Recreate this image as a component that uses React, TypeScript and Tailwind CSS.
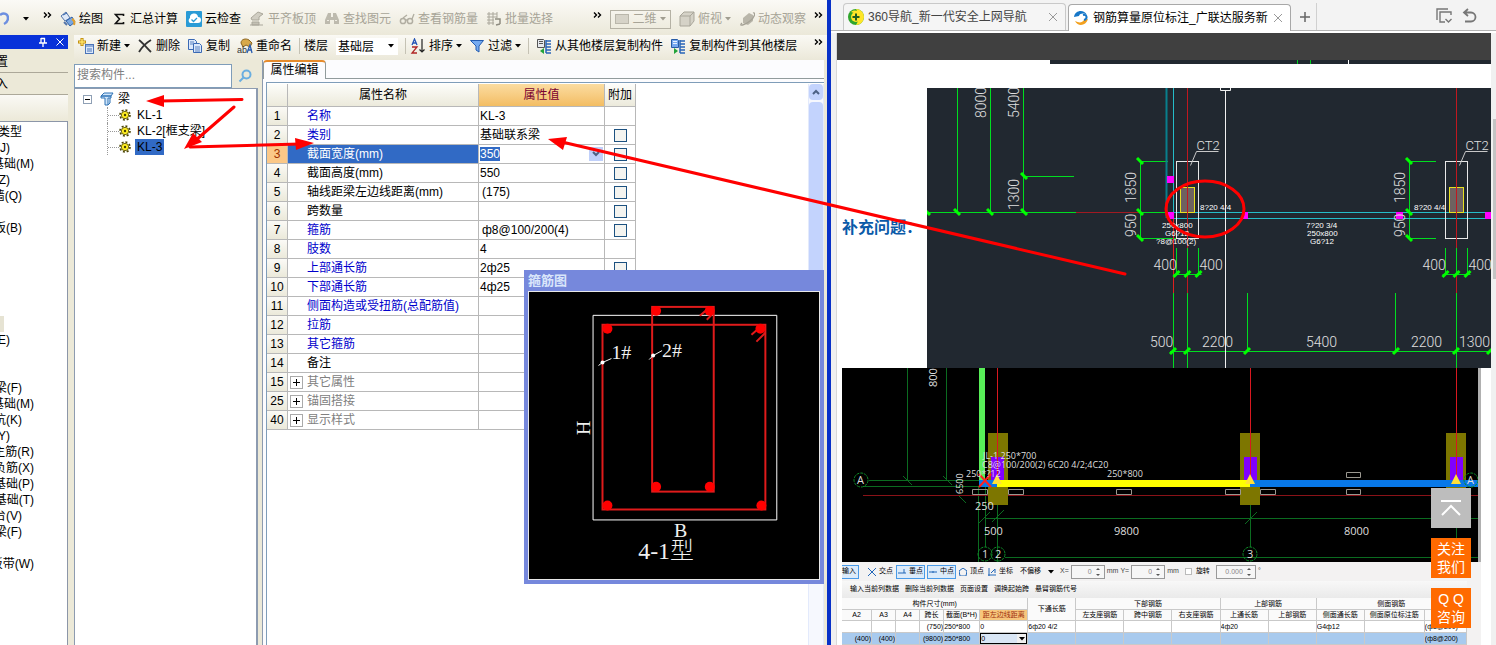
import type { ReactNode } from "react";

interface PropertyRow {
  no: number;
  name: string;
  value?: string;
  tone?: "blue" | "gray" | "black";
  check?: boolean;
  group?: boolean;
}

const properties: PropertyRow[] = [
  { no: 1, name: "名称", value: "KL-3", tone: "blue" },
  { no: 2, name: "类别", value: "基础联系梁", tone: "blue", check: true },
  { no: 3, name: "截面宽度(mm)", value: "350", check: true },
  { no: 4, name: "截面高度(mm)", value: "550", check: true },
  { no: 5, name: "轴线距梁左边线距离(mm)", value: "(175)", check: true },
  { no: 6, name: "跨数量", check: true },
  { no: 7, name: "箍筋", value: "ф8@100/200(4)", tone: "blue", check: true },
  { no: 8, name: "肢数", value: "4", tone: "blue" },
  { no: 9, name: "上部通长筋", value: "2ф25", tone: "blue", check: true },
  { no: 10, name: "下部通长筋", value: "4ф25", tone: "blue", check: true },
  { no: 11, name: "侧面构造或受扭筋(总配筋值)", tone: "blue", check: true },
  { no: 12, name: "拉筋", tone: "blue", check: true },
  { no: 13, name: "其它箍筋", tone: "blue" },
  { no: 14, name: "备注", check: true },
  { no: 15, name: "其它属性", tone: "gray", group: true },
  { no: 25, name: "锚固搭接", tone: "gray", group: true },
  { no: 40, name: "显示样式", tone: "gray", group: true },
];

const toneClass = {
  blue: "text-[#0000cc]",
  gray: "text-[#808080]",
  black: "text-black",
};

// The module list is scrolled sideways, so each label keeps only its right end.
const modules: { text: string; width: string }[] = [
  { text: "类型", width: "w-[22px]" },
  { text: "轴网(J)", width: "w-[10px]" },
  { text: "基础(M)", width: "w-[34px]" },
  { text: "柱(Z)", width: "w-[10px]" },
  { text: "墙(Q)", width: "w-[22px]" },
  { text: "", width: "w-0" },
  { text: "板(B)", width: "w-[22px]" },
  { text: "", width: "w-0" },
  { text: "", width: "w-0" },
  { text: "", width: "w-0" },
  { text: "", width: "w-0" },
  { text: "", width: "w-0" },
  { text: "", width: "w-[4px] bg-[#e6e3d3]" },
  { text: "(E)", width: "w-[10px]" },
  { text: "", width: "w-0" },
  { text: "", width: "w-0" },
  { text: "梁(F)", width: "w-[22px]" },
  { text: "基础(M)", width: "w-[34px]" },
  { text: "坑(K)", width: "w-[22px]" },
  { text: "(Y)", width: "w-[10px]" },
  { text: "主筋(R)", width: "w-[34px]" },
  { text: "负筋(X)", width: "w-[34px]" },
  { text: "基础(P)", width: "w-[34px]" },
  { text: "基础(T)", width: "w-[34px]" },
  { text: "台(V)", width: "w-[22px]" },
  { text: "梁(F)", width: "w-[22px]" },
  { text: "", width: "w-0" },
  { text: "板带(W)", width: "w-[34px]" },
];

function Icon({ children }: { children: ReactNode }) {
  return (
    <svg viewBox="0 0 16 16" className="h-4 w-4 shrink-0" fill="none" aria-hidden="true">
      {children}
    </svg>
  );
}

function Caret({ gray = false }: { gray?: boolean }) {
  return (
    <svg viewBox="0 0 6 4" className="h-1 w-1.5 shrink-0" aria-hidden="true">
      <path d="M0 0h6L3 3.5z" fill={gray ? "#a09d90" : "#000"} />
    </svg>
  );
}

function More() {
  return (
    <button aria-label="更多" className="shrink-0 pb-2">
      <svg viewBox="0 0 9 6" className="h-1.5 w-[9px]" fill="none" stroke="#000" strokeWidth="1.4">
        <path d="M1 .5 3.5 3 1 5.5M5 .5 7.5 3 5 5.5" />
      </svg>
    </button>
  );
}

function Tool({ icon, label, disabled, caret }: { icon: ReactNode; label: string; disabled?: boolean; caret?: boolean }) {
  return (
    <button
      disabled={disabled}
      className={`flex shrink-0 items-center gap-[3px] whitespace-nowrap ${disabled ? "text-[#a7a497]" : "text-black"}`}
    >
      <Icon>{icon}</Icon>
      <span>{label}</span>
      {caret && <Caret gray={disabled} />}
    </button>
  );
}

function Separator() {
  return <span className="h-4 w-px shrink-0 bg-[#c5c2b4]" />;
}

const icons = {
  draw: (
    <>
      <path d="M1 5 6 1l4 6-5 3z" fill="#dfe9f8" stroke="#5575a8" />
      <path d="m3 4 4-2M6 10l6-4 3 5-5 4z" fill="#7aa7e0" stroke="#2c5ea8" />
      <path d="M12 8c2 1 3 3 2 6" stroke="#e0a030" strokeWidth="2" />
      <path d="m4 11 3 3" stroke="#5575a8" strokeWidth="2" />
    </>
  ),
  sum: <path d="M12.500 5V3.500H4.500L8.500 8l-4 4.500h8V11" stroke="#111" strokeWidth="1.600" />,
  cloud: (
    <>
      <rect width="16" height="16" rx="1" fill="#2a9bd6" />
      <path d="M4 12a3 3 0 0 1 0-5 4 4 0 0 1 8-1 3 3 0 0 1 0 6z" fill="#fff" />
      <path d="m5.500 8.500 2 2 3.500-3.500" stroke="#2a9bd6" strokeWidth="1.300" />
    </>
  ),
  align: (
    <>
      <path d="M2 7 9 1l5 2-4 3v3H3z" fill="#d0cdc2" stroke="#aaa79b" />
      <path d="M3 11h7v3H3zM1 14h13" fill="#c3c0b4" stroke="#aaa79b" />
    </>
  ),
  find: (
    <>
      <path d="M4 2h3v4h2V2h3l3 7v4h-5V9H6v4H1V9z" fill="#bdbaae" />
      <path d="M3 9.500h2M11 9.500h2" stroke="#efede3" />
    </>
  ),
  glasses: (
    <>
      <circle cx="4" cy="10" r="2.600" stroke="#b1aea2" strokeWidth="1.500" />
      <circle cx="11" cy="10" r="2.600" stroke="#b1aea2" strokeWidth="1.500" />
      <path d="M6 9h3M13 8l2-5M4 7l4-3" stroke="#b1aea2" strokeWidth="1.300" />
    </>
  ),
  batch: (
    <>
      <path d="M1 3h10M1 6h10M1 9h7M1 12h7M3 1v13M7 1v13M11 1v6" stroke="#aaa79b" />
      <path d="M9 8h5v5M10 14l4-1" stroke="#8f8c80" strokeWidth="1.500" />
    </>
  ),
  cube: (
    <>
      <path d="M1 5 5 1h10v9l-4 5H1z" fill="#d5d2c7" stroke="#a9a69a" />
      <path d="M1 5h10v10M11 5l4-4" stroke="#a9a69a" />
    </>
  ),
  orbit: (
    <>
      <path d="M4 7 10 2l4 2v6l-5 4-5-2z" fill="#b9b6aa" />
      <path d="M3 12C-1 16 6 14 11 10s6-9 3-8" stroke="#a5a296" strokeWidth="1.300" />
    </>
  ),
  create: (
    <>
      <path d="M4 0v8M0 4h8" stroke="#b98400" strokeWidth="3" />
      <path d="M4 .8v6.400M.8 4h6.400" stroke="#ffe36a" strokeWidth="1.500" />
      <rect x="7.500" y="6.500" width="8" height="9" fill="#dbe8fb" stroke="#4b74b8" />
      <path d="M8 8h7M9 11h5M9 13h5" stroke="#4b74b8" />
    </>
  ),
  remove: <path d="M2 2c4 3 8 8 12 12M14 2C9 5 5 9 2 14" stroke="#333" strokeWidth="1.800" />,
  copy: (
    <>
      <path d="M1.500 1.500h6l2 2v8h-8z" fill="#dce8fb" stroke="#3a69b4" />
      <path d="M6.500 5.500h6l2 2v7h-8z" fill="#dce8fb" stroke="#3a69b4" />
      <path d="M3 4h4M3 6h3M8 9h5M8 11h5M8 13h5" stroke="#3a69b4" strokeWidth=".8" />
    </>
  ),
  rename: (
    <>
      <path d="M4 5c0-4 5-5 8-3l3 3-2 4-4-2-3 2z" fill="#d8a94a" stroke="#8b6420" />
      <text x="0" y="15" fontSize="9" fontFamily="Liberation Sans" fill="#333">ab</text>
      <path d="m10 15 3-8 2 8M11 12h4" stroke="#2c5eb0" strokeWidth="1.300" />
    </>
  ),
  sort: (
    <>
      <path d="m2 7 2.500-6L7 7M3 5h3" stroke="#2453b5" strokeWidth="1.300" />
      <path d="M2 9h5l-5 6h5" stroke="#b02525" strokeWidth="1.300" />
      <path d="M12 1v13M9.500 11.500 12 14l2.500-2.500" stroke="#222" strokeWidth="1.200" />
    </>
  ),
  filter: <path d="M1.500 2.500h13L10 8v6l-3-2V8z" fill="#75aaf0" stroke="#225bb0" />,
  floorFrom: (
    <>
      <path d="M1.500 1.500h6l1 1v7h-7z" fill="#e6e9ee" stroke="#555" />
      <path d="M3 3.500h4M3 5.500h4" stroke="#555" />
      <path d="M10 3h5M10 6h5M10 9h5M10 12h5M10 15h5M10 2v13" stroke="#2864b8" strokeWidth="1.500" />
      <path d="M8 10 4 13l4 3z" fill="#22a33a" />
    </>
  ),
  floorTo: (
    <>
      <path d="M1.500 1.500h6l1 1v7h-7z" fill="#76a8ef" stroke="#285ba5" />
      <path d="M3 3.500h4M3 5.500h4" stroke="#e8f1ff" />
      <path d="M10 3h5M10 6h5M10 9h5M10 12h5M10 15h5M10 2v13" stroke="#2864b8" strokeWidth="1.500" />
      <path d="m4 10 4 3-4 3z" fill="#22a33a" />
    </>
  ),
};

function MainToolbar() {
  return (
    <div className="flex h-[35px] shrink-0 items-center bg-gradient-to-b from-[#fbfaf6] to-[#ebe8d9] pt-[3px]">
      <div className="flex w-[60px] shrink-0 items-center justify-between pr-2">
        <button aria-label="撤销">
          <svg viewBox="0 0 9 16" className="h-4 w-[9px]" fill="none">
            <path d="M0 4c4-3 8-1 8 3 0 3-2 5-4 6" stroke="#6d8fe0" strokeWidth="2.500" />
          </svg>
        </button>
        <Caret />
        <More />
      </div>
      <div className="flex min-w-0 flex-1 items-center gap-2 overflow-hidden">
        <Tool icon={icons.draw} label="绘图" />
        <Tool icon={icons.sum} label="汇总计算" />
        <Tool icon={icons.cloud} label="云检查" />
        <Tool icon={icons.align} label="平齐板顶" disabled />
        <Tool icon={icons.find} label="查找图元" disabled />
        <Tool icon={icons.glasses} label="查看钢筋量" disabled />
        <Tool icon={icons.batch} label="批量选择" disabled />
      </div>
      <div className="flex shrink-0 items-center gap-2 pr-1">
        <More />
        <button disabled className="flex h-[19px] w-[61px] items-center justify-between border border-[#b5b2a5] px-1 text-[#a7a497]">
          <span className="h-2.5 w-3.5 border border-[#bab7ab] bg-[#d6d3c8]" />
          <span>二维</span>
          <Caret gray />
        </button>
        <Tool icon={icons.cube} label="俯视" disabled caret />
        <Tool icon={icons.orbit} label="动态观察" disabled />
        <More />
      </div>
    </div>
  );
}

function ComponentToolbar() {
  return (
    <div className="flex h-[25px] shrink-0 items-center gap-[7px] bg-gradient-to-b from-[#faf9f4] to-[#ebe8d9] px-1 pb-[3px]">
      <Tool icon={icons.create} label="新建" caret />
      <Tool icon={icons.remove} label="删除" />
      <Tool icon={icons.copy} label="复制" />
      <Tool icon={icons.rename} label="重命名" />
      <div className="flex shrink-0 items-center gap-1">
        <Separator />
        <label htmlFor="floor">楼层</label>
        <div className="relative ml-1 flex items-center">
          <select id="floor" className="h-[17px] w-[62px] appearance-none bg-white pl-0.5">
            <option>基础层</option>
          </select>
          <span className="pointer-events-none absolute right-1 flex"><Caret /></span>
        </div>
      </div>
      <div className="flex shrink-0 items-center gap-1">
        <Separator />
        <Tool icon={icons.sort} label="排序" caret />
      </div>
      <Tool icon={icons.filter} label="过滤" caret />
      <Separator />
      <Tool icon={icons.floorFrom} label="从其他楼层复制构件" />
      <Tool icon={icons.floorTo} label="复制构件到其他楼层" />
      <span className="ml-auto flex"><More /></span>
    </div>
  );
}

function ModulePanel() {
  return (
    <aside className="flex w-[68px] shrink-0 flex-col">
      <div className="flex h-[14px] items-center justify-end gap-2 bg-[#0831d9] pr-1">
        <button aria-label="固定">
          <svg viewBox="0 0 10 10" className="h-2.5 w-2.5" fill="none" stroke="#fff">
            <path d="M3 1v5M6.500 1v5M3 1.500h4M1 6h8M5 6v4" strokeWidth="1.300" />
          </svg>
        </button>
        <button aria-label="关闭">
          <svg viewBox="0 0 8 8" className="h-2 w-2" stroke="#fff">
            <path d="m.5.5 7 7m0-7-7 7" />
          </svg>
        </button>
      </div>
      <button className="mt-0.5 h-[22px] overflow-hidden border-b border-[#aca899] bg-[#ece9d8] text-left">
        <span className="-ml-1 block leading-5">置</span>
      </button>
      <button className="h-[22px] overflow-hidden border-b border-[#aca899] bg-[#ece9d8] text-left">
        <span className="-ml-1 block leading-5">入</span>
      </button>
      <div className="h-[26px] bg-gradient-to-b from-[#faf9f5] to-[#ece9d8]" />
      <ul className="flex-1 overflow-hidden border-t border-r border-[#8c96a8] bg-white pt-0.5">
        {modules.map((item, index) => (
          <li key={index} className={`flex h-4 items-center justify-end overflow-hidden whitespace-nowrap ${item.width}`}>
            {item.text}
          </li>
        ))}
      </ul>
    </aside>
  );
}

function Gear() {
  return (
    <svg viewBox="0 0 12 12" className="h-3 w-3" fill="none">
      <circle cx="6" cy="6" r="5" stroke="#4a4300" strokeWidth="1.600" strokeDasharray="2 1.900" />
      <circle cx="6" cy="6" r="3.700" fill="#ffee22" stroke="#4a4300" strokeWidth=".8" />
      <circle cx="6" cy="6" r="1.200" fill="#4a4300" />
    </svg>
  );
}

function ComponentTree() {
  return (
    <section className="flex w-[184px] shrink-0 flex-col">
      <div className="flex h-[28px] items-end">
        <input
          aria-label="搜索构件"
          placeholder="搜索构件..."
          className="h-6 w-[158px] border border-[#7f9db9] bg-white px-0.5 pb-0.5 placeholder:text-[#808080]"
        />
        <button aria-label="搜索" className="flex h-6 flex-1 items-center justify-center">
          <svg viewBox="0 0 14 14" className="h-3.5 w-3.5" fill="none" stroke="#6aaee0" strokeWidth="2">
            <circle cx="8.500" cy="5.500" r="4" />
            <path d="M5.500 8.500 1.500 12.500" />
          </svg>
        </button>
      </div>
      <div className="flex-1 border-2 border-t border-b-0 border-l border-[#8d9bb0] bg-white pt-0.5 pl-2">
        <div className="flex h-4 items-center">
          <span className="flex h-[9px] w-[9px] items-center justify-center border border-[#8fa0b5]">
            <span className="h-px w-[5px] bg-black" />
          </span>
          <svg viewBox="0 0 14 14" className="ml-2 h-3.5 w-3.5" fill="#cfe5fa" stroke="#2f72b5">
            <path d="M1 4 4 1h9l-2 3zM1 4h10v2H8v7H5V6H1zM8 13l2-2V6" />
          </svg>
          <span className="ml-1">梁</span>
        </div>
        <ul className="ml-6">
          {["KL-1", "KL-2[框支梁]", "KL-3"].map((name) => (
            <li key={name} className="flex h-4 items-center border-l border-dotted border-[#999]">
              <span className="w-[11px] border-t border-dotted border-[#999]" />
              <Gear />
              <span className={name === "KL-3" ? "ml-1 bg-[#316ac5] px-0.5 leading-4" : "ml-1 px-0.5 leading-4"}>{name}</span>
            </li>
          ))}
        </ul>
      </div>
    </section>
  );
}

function ValueCell({ row }: { row: PropertyRow }) {
  if (row.no === 3) {
    return (
      <div className="flex items-center justify-between">
        <input
          aria-label={row.name}
          defaultValue={row.value}
          className="h-3.5 w-5 bg-[#316ac5] text-white"
        />
        <button aria-label="展开" className="flex h-3.5 w-3.5 items-center justify-center bg-[#c0d0fa]">
          <svg viewBox="0 0 8 6" className="h-1.5 w-2" fill="none" stroke="#4d6185" strokeWidth="2">
            <path d="m1 1 3 3 3-3" />
          </svg>
        </button>
      </div>
    );
  }
  return <span className={row.value?.startsWith("(") || row.value?.startsWith("ф") ? "pl-0.5" : ""}>{row.value}</span>;
}

function PropertyTable() {
  const cell = "border-r border-b border-[#b8b8b8] p-0";
  return (
    <table className="h-fit w-[369px] shrink-0 table-fixed border-separate border-spacing-0 leading-[18px]">
      <colgroup>
        <col className="w-[21px]" />
        <col className="w-[191px]" />
        <col className="w-[126px]" />
        <col className="w-[31px]" />
      </colgroup>
      <thead>
        <tr className="h-[23px] bg-gradient-to-b from-[#fdfdfa] to-[#ebe9da]">
          <th className={cell} />
          <th className={`${cell} font-normal`}>属性名称</th>
          <th className={`${cell} bg-gradient-to-b from-[#fbdca0] to-[#f3bd62] font-normal text-[#7a0030]`}>属性值</th>
          <th className={`${cell} font-normal`}>附加</th>
        </tr>
      </thead>
      <tbody>
        {properties.map((row) => (
          <tr key={row.no} className="h-[19px]">
            <td className={`${cell} text-center ${row.no === 3 ? "bg-[#fbc888] text-[#a03000]" : "bg-gradient-to-b from-[#fbfaf6] to-[#ebe9da]"}`}>
              {row.no}
            </td>
            <td className={`${cell} ${row.no === 3 ? "bg-[#316ac5] text-white" : toneClass[row.tone ?? "black"]}`}>
              <div className="flex items-center">
                <span className="flex w-[19px] justify-start pl-0.5">
                  {row.group && (
                    <button aria-label={`展开${row.name}`} className="flex h-[13px] w-[13px] items-center justify-center border border-[#aaa] text-black">
                      <svg viewBox="0 0 7 7" className="h-[7px] w-[7px]" stroke="#000"><path d="M0 3.500h7M3.500 0v7" /></svg>
                    </button>
                  )}
                </span>
                {row.name}
              </div>
            </td>
            <td className={cell}><div className="px-px"><ValueCell row={row} /></div></td>
            <td className={cell}>
              {row.check && (
                <input
                  type="checkbox"
                  aria-label={`附加 ${row.name}`}
                  className="mx-auto block h-[13px] w-[13px] appearance-none border border-[#1c5180] bg-[#f4f4f0]"
                />
              )}
            </td>
          </tr>
        ))}
      </tbody>
    </table>
  );
}

function PropertyEditor() {
  return (
    <section className="flex min-w-0 flex-1 flex-col border-l border-[#8d9bb0] bg-[#fcfcfe]">
      <div className="flex h-[19px] items-end border-b border-[#919b9c]">
        <button className="relative -mb-px h-[19px] w-[63px] rounded-t border border-t-2 border-b-0 border-[#919b9c] border-t-[#e68b2c] bg-[#fcfcfe] pb-0.5 leading-4">
          属性编辑
        </button>
      </div>
      <div className="mt-[3px] ml-[3px] flex flex-1 justify-between overflow-hidden border-t border-l border-[#7f9db9] bg-white pt-px">
        <PropertyTable />
        <div className="flex w-4 flex-col items-center gap-0.5 border-x border-[#e3eafc] bg-[#f6f8fe]">
          <button aria-label="向上滚动" className="flex h-4 w-3.5 items-center justify-center rounded-sm bg-[#c3d3fd]">
            <svg viewBox="0 0 8 6" className="h-1.5 w-2" fill="none" stroke="#4d6185" strokeWidth="2">
              <path d="m1 5 3-3 3 3" />
            </svg>
          </button>
          <div className="h-3/4 w-3.5 rounded-sm bg-[#c3d3fd]" />
        </div>
      </div>
    </section>
  );
}

function StirrupDialog() {
  return (
    <div role="dialog" aria-label="箍筋图" className="absolute top-[270px] left-[524px] w-[300px] bg-[#7688dc] px-1 pb-1">
      <h2 className="flex h-[21px] items-center text-[13px] font-bold text-[#d9e5fa]">箍筋图</h2>
      <svg viewBox="528 291 292 289" className="block w-full border border-[#e8e8e8] bg-black" fill="none">
        <path d="M592.500 314.500h185v206h-185z" stroke="#fff" />
        <g stroke="#e01b1b" strokeWidth="2">
          <rect x="602" y="324" width="164" height="186" />
          <rect x="652" y="306" width="62" height="186" />
          <path d="m752 334 8-7M757 341l9-9M700 315l7-6M707 319l7-7" />
        </g>
        <g fill="#ff0000">
          {[[607, 328], [761, 328], [607, 506], [762, 506], [656, 310], [710, 310], [656, 487], [710, 487]].map(([x, y]) => (
            <circle key={`${x}-${y}`} cx={x} cy={y} r="5" />
          ))}
        </g>
        <path d="m598 365 4-3 9-4M649 359l4-4 9-5" stroke="#fff" />
        <circle cx="602" cy="362" r="2" fill="#fff" />
        <circle cx="653" cy="355" r="2" fill="#fff" />
        <g fill="#f0f0f0" fontFamily="Liberation Serif, Noto Sans CJK SC, serif" fontSize="20">
          <text x="611" y="358">1#</text>
          <text x="662" y="356">2#</text>
          <text x="674" y="538">B</text>
          <text transform="translate(589 435) rotate(-90)">H</text>
          <text x="638" y="560" fontSize="24" fontWeight="300">4-1型</text>
        </g>
      </svg>
    </div>
  );
}

function BrowserTab({ label, active, children }: { label: string; active?: boolean; children: ReactNode }) {
  return (
    <div
      className={`relative flex h-[27px] w-[223px] items-center gap-1 rounded-t border border-b-0 px-1 ${
        active ? "-mb-px h-7 border-[#a8a8a8] bg-white text-black" : "border-[#c9c9c9] bg-[#f5f5f5] text-[#444]"
      }`}
    >
      <Icon>{children}</Icon>
      <span className="flex-1 overflow-hidden whitespace-nowrap">{label}</span>
      <button aria-label="关闭标签页">
        <svg viewBox="0 0 8 8" className="mr-1 h-2 w-2" stroke="#999"><path d="m0 0 8 8m0-8L0 8" /></svg>
      </button>
    </div>
  );
}

function BrowserTabs() {
  return (
    <header className="flex h-[31px] shrink-0 items-end gap-0.5 border-b border-[#b4b4b4] bg-[#f3f3f3] pl-3">
      <BrowserTab label="360导航_新一代安全上网导航">
        <circle cx="8" cy="8" r="8" fill="#30a52c" />
        <path d="M8 0a8 8 0 0 1 0 16c3-4 3-12 0-16M3 3c4-3 8-1 9 3" fill="#ffe528" />
        <circle cx="8" cy="8" r="5" fill="#ffe528" />
        <path d="M8 4.500v7M4.500 8h7" stroke="#205d20" strokeWidth="2" />
      </BrowserTab>
      <BrowserTab label="钢筋算量原位标注_广联达服务新" active>
        <path d="M1 7C2 0 11-1 14 5c-3-2-7-2-8 1" fill="#1677c8" />
        <path d="M15 9c-2 7-10 8-13 2 4 2 7 2 9-1" fill="#f2a01e" />
        <path d="M10 5c4-1 5 4 1 5" stroke="#1677c8" strokeWidth="2" />
      </BrowserTab>
      <button aria-label="新建标签页" className="flex h-[27px] w-6 items-center justify-center border-r border-[#d0d0d0]">
        <svg viewBox="0 0 10 10" className="h-2.5 w-2.5" stroke="#666" strokeWidth="1.500"><path d="M0 5h10M5 0v10" /></svg>
      </button>
      <div className="mr-[18px] mb-1.5 ml-auto flex gap-2.5">
        <button aria-label="恢复页面">
          <svg viewBox="0 0 16 16" className="h-4 w-4" fill="none" stroke="#777" strokeWidth="1.400">
            <path d="M12 1H1v11M15 7V4H4v10h5M9.500 11l3 3 3-3" />
          </svg>
        </button>
        <button aria-label="撤销关闭">
          <svg viewBox="0 0 16 16" className="h-4 w-4" fill="none" stroke="#777" strokeWidth="1.800">
            <path d="M6 1 2 4.500 6 8M2 4.500h7a4.500 4.500 0 0 1 0 9H3" />
          </svg>
        </button>
      </div>
    </header>
  );
}

function Ticks({ points, flip }: { points: number[][]; flip?: boolean }) {
  return (
    <g stroke="#00ff00" strokeWidth="3">
      {points.map(([x, y]) => (
        <path key={`${x}-${y}`} d={flip ? `M${x - 3} ${y - 3}l6 6` : `M${x - 3} ${y + 3}l6-6`} />
      ))}
    </g>
  );
}

function Footing({ x }: { x: number }) {
  return (
    <g fill="none">
      <rect x={x - 11} y="161.500" width="22" height="77" stroke="#e8e8e8" />
      <rect x={x - 7} y="187.500" width="14" height="25" fill="#6e6260" stroke="#e8e020" />
      <path d={`M${x} 88v205`} stroke="#c01820" />
      <path d={`M${x + 31} 151.500h-22l-6 14`} stroke="#c8c8c8" />
      <path d={`M${x} 293v75M${x - 11} 248v27M${x} 248v27M${x + 11} 248v27M${x - 14} 274.500h28`} stroke="#00dd20" />
      <Ticks points={[[x - 11, 274], [x, 274], [x + 11, 274]]} />
      <g fill="#e0e0e0">
        <text x={x + 9} y="150" fontSize="13">CT2</text>
        <text x={x - 34} y="270">400</text>
        <text x={x + 12} y="270">400</text>
      </g>
    </g>
  );
}

function FoundationPlan() {
  return (
    <svg
      viewBox="927 88 564 280"
      preserveAspectRatio="xMinYMin slice"
      className="h-[280px] min-w-0 flex-1 bg-[#212830]"
      fill="none"
      fontFamily="Roboto, sans-serif"
      fontSize="14"
      fontWeight="300"
    >
      <path d="M957.500 88v124M990.500 88v124M1023.500 88v124M927 212.500h149M1023 176.500h51" stroke="#00dd20" />
      <path d="M1076 212.500h94" stroke="#a01a22" />
      <path d="M1140.500 161v78M1140 161.500h28M1140 212.500h27M1140 238.500h38" stroke="#00dd20" />
      <path d="M1409.500 161v78M1409 161.500h27M1409 212.500h27M1409 238.500h27M1247.500 293v58M1395.500 293v58M1173.500 293v75M1170 351.500h321" stroke="#00dd20" />
      <path d="M1166.500 88v130" stroke="#087f8c" strokeWidth="2" />
      <path d="M1173.500 88v131M1173 212.500h318M1173 218.500h318" stroke="#25bcc8" />
      <path d="M1173.500 219v74" stroke="#e02020" />
      <path d="M1225.500 91v277M1220.500 88v2.500h10V88" stroke="#f0f0f0" />
      <Footing x={1187.500} />
      <Footing x={1456.500} />
      <Ticks flip points={[[957, 212], [990, 212], [1024, 212], [1024, 176], [927, 212], [1140, 161], [1140, 212], [1140, 238], [1409, 161], [1409, 212], [1409, 238]]} />
      <Ticks points={[[1173, 351], [1187, 351], [1247, 351], [1396, 351], [1456, 351], [1490, 351]]} />
      <path
        d="M1167 176h7v7h-7zM1167 212h7v7h-7zM1242 212h6v7h-6zM1396 212h7v7h-7zM1485 212h6v7h-6z"
        fill="#ff00ff"
      />
      <g fill="#e0e0e0">
        <text transform="translate(986 118) rotate(-90)">8000</text>
        <text transform="translate(1019 118) rotate(-90)">5400</text>
        <text transform="translate(1019 210) rotate(-90)">1300</text>
        <text transform="translate(1136 203) rotate(-90)">1850</text>
        <text transform="translate(1136 237) rotate(-90)">950</text>
        <text transform="translate(1405 203) rotate(-90)">1850</text>
        <text transform="translate(1405 237) rotate(-90)">950</text>
        <text x="1150" y="347">500</text>
        <text x="1202" y="347">2200</text>
        <text x="1306" y="347">5400</text>
        <text x="1411" y="347">2200</text>
        <text x="1459" y="347">1300</text>
      </g>
      <g fontFamily="Liberation Sans, sans-serif" fontSize="8" fontWeight="400" fill="#ffffff">
        <text x="1200" y="210">8?20 4/4</text>
        <text x="1414" y="210">8?20 4/4</text>
        <text x="1162" y="228">250x800</text>
        <text x="1165" y="236">G6?12</text>
        <text x="1156" y="244">?8@100(2)</text>
        <text x="1306" y="228">7?20 3/4</text>
        <text x="1307" y="236">250x800</text>
        <text x="1310" y="244">G6?12</text>
      </g>
    </svg>
  );
}

function BeamPlan() {
  return (
    <svg
      viewBox="842 368 636 194"
      preserveAspectRatio="xMinYMin slice"
      className="h-[194px] min-w-0 flex-1 bg-black"
      fill="none"
    >
      <path d="M907.500 368v112M946.500 368v112M869 480.500h110M863 486.500h116" stroke="#0b6b20" />
      <path d="M978.500 487v75M985.500 487v60M997.500 505v57M1250.500 505v42M1456.500 505v57M985 518.500h493M1005 557.500h473" stroke="#0b6b20" />
      <path d="m903 476 9 9M943 476l9 9M958 495l8 8M978 524l12-12M992 522l12-12M1245 524l12-12" stroke="#0b6b20" />
      <path d="M863 495.500h615" stroke="#8a1218" />
      <path d="M988 433h20v72h-20zM1240 433h20v72h-20zM1446 433h20v72h-20z" fill="#7d7600" />
      <path d="M979 368h6v114h-6z" fill="#58ee58" />
      <path d="M991 457h13v23h-13zM1244 457h13v23h-13zM1450 457h13v23h-13z" fill="#8000ff" />
      <path d="M979 480h18v7h-18zM1250 480h228v7h-228z" fill="#0878e8" />
      <path d="M997 480h253v7H997z" fill="#ffff00" />
      <path d="M997.500 368v112M1250.500 368v112M1456.500 368v112" stroke="#d81820" />
      <path d="m992 484 5-10 5 10zM1245 484l5-10 5 10zM1451 484l5-10 5 10z" fill="#ffe03a" />
      <path d="m979 474 12 13m0-13-12 13" stroke="#ff2020" strokeWidth="2" />
      <path
        d="M972.500 489.500h15v5h-15zM1008.500 489.500h15v5h-15zM1116.500 489.500h15v5h-15zM1225.500 489.500h15v5h-15zM1260.500 489.500h15v5h-15zM1346.500 472.500h14v5h-14zM1346.500 489.500h14v5h-14z"
        stroke="#9b9890"
      />
      <g stroke="#0e8a28" strokeDasharray="3 1">
        <circle cx="861" cy="480" r="7" />
        <circle cx="985" cy="554" r="7" />
        <circle cx="998" cy="554" r="7" />
        <circle cx="1250" cy="554" r="7" />
        <circle cx="1471" cy="480" r="7" />
      </g>
      <g fill="#dedede" fontFamily="Open Sans, sans-serif" fontSize="9">
        <text x="983" y="459">JL-1 250*700</text>
        <text x="982" y="468">C8@100/200(2) 6C20 4/2;4C20</text>
        <text x="966" y="477">250*?12</text>
        <text x="1107" y="477">250*800</text>
        <text transform="translate(963 494) rotate(-90)">6500</text>
        <g fontSize="11">
          <text x="975" y="510">250</text>
          <text x="984" y="535">500</text>
          <text x="1114" y="535">9800</text>
          <text x="1344" y="535">8000</text>
          <text transform="translate(937 387) rotate(-90)">800</text>
          <text x="857" y="484">A</text>
          <text x="1467" y="484">A</text>
          <text x="982" y="558">1</text>
          <text x="995" y="558">2</text>
          <text x="1247" y="558">3</text>
        </g>
      </g>
    </svg>
  );
}

function SnapButton({ label, active, path }: { label: string; active?: boolean; path: string }) {
  return (
    <button className={`flex h-3.5 items-center gap-[3px] px-px ${active ? "border border-[#4a9be8] bg-[#dcebfa]" : ""}`}>
      <svg viewBox="0 0 8 8" className="h-2 w-2" fill="none" stroke="#2166b8"><path d={path} /></svg>
      {label}
    </button>
  );
}

function NumberField({ label, value, unit, wide }: { label: string; value: string; unit: string; wide?: boolean }) {
  return (
    <label className="flex items-center gap-0.5 text-[#444]">
      {label}
      <span className={`flex h-3.5 items-center border border-[#999] bg-[#f6f6f6] ${wide ? "w-10" : "w-[34px]"}`}>
        <input defaultValue={value} className="h-3 w-full min-w-0 pr-1 text-right text-[#888]" />
        <svg viewBox="0 0 4 10" className="mr-1 h-2.5 w-1 shrink-0" fill="#555"><path d="m0 3 2-2 2 2zM0 7l2 2 2-2z" /></svg>
      </span>
      {unit}
    </label>
  );
}

const columns: { label: string; width: string }[] = [
  { label: "A2", width: "w-[30px]" },
  { label: "A3", width: "w-6" },
  { label: "A4", width: "w-6" },
  { label: "跨长", width: "w-6" },
  { label: "截面(B*H)", width: "w-9" },
  { label: "距左边线距离", width: "w-12" },
  { label: "下通长筋", width: "w-12" },
  { label: "左支座钢筋", width: "w-12" },
  { label: "跨中钢筋", width: "w-12" },
  { label: "右支座钢筋", width: "w-12" },
  { label: "上通长筋", width: "w-12" },
  { label: "上部钢筋", width: "w-12" },
  { label: "侧面通长筋", width: "w-12" },
  { label: "侧面原位标注筋", width: "w-[60px]" },
  { label: "", width: "w-[42px]" },
];

const spans = [
  ["", "", "", "(750)", "250*800", "0", "6ф20 4/2", "", "", "", "4ф20", "", "G4ф12", "", "(ф8@200)"],
  ["(400)", "(400)", "", "(9800)", "250*800", "0", "", "", "", "", "", "", "", "", "(ф8@200)"],
];

function SpanTable() {
  const cell = "overflow-hidden border-r border-b border-[#c9c9c9] p-0 font-normal whitespace-nowrap";
  return (
    <table className="w-full table-fixed border-separate border-spacing-0 bg-white text-[7px] leading-[10px]">
      <colgroup>
        {columns.map((column, index) => <col key={index} className={column.width} />)}
      </colgroup>
      <thead className="bg-[#fafafa]">
        <tr className="h-3">
          <th colSpan={6} className={cell}>构件尺寸(mm)</th>
          <th rowSpan={2} className={cell}>下通长筋</th>
          <th colSpan={3} className={cell}>下部钢筋</th>
          <th colSpan={2} className={cell}>上部钢筋</th>
          <th colSpan={3} className={cell}>侧面钢筋</th>
        </tr>
        <tr className="h-[11px]">
          {columns.filter((column) => column.label !== "下通长筋").map((column) => (
            <th key={column.label} className={`${cell} ${column.label === "距左边线距离" ? "bg-[#f7c67c] text-[#a03010]" : ""}`}>
              {column.label}
            </th>
          ))}
        </tr>
      </thead>
      <tbody>
        {spans.map((values, row) => (
          <tr key={row} className={row === 1 ? "h-3 bg-[#a8caee]" : "h-3"}>
            {values.map((value, index) => (
              <td key={index} className={`${cell} ${index < 4 ? "text-right" : ""}`}>
                {row === 1 && index === 5 ? (
                  <div className="relative flex items-center">
                    <select aria-label="距左边线距离" className="h-[11px] w-full appearance-none border border-black bg-[#d9e6f5]">
                      <option>0</option>
                    </select>
                    <span className="pointer-events-none absolute right-px flex h-[9px] w-[9px] items-center justify-center bg-[#f0f0f0]">
                      <Caret />
                    </span>
                  </div>
                ) : (
                  value
                )}
              </td>
            ))}
          </tr>
        ))}
      </tbody>
    </table>
  );
}

function BeamTools() {
  return (
    <div className="bg-[#f3f2f2] pr-3.5 text-[7px]">
      <div className="flex h-[19px] items-center gap-0.5 whitespace-nowrap">
        <button className="mr-1.5 h-3.5 border border-l-0 border-[#4a9be8] bg-[#dcebfa] pr-0.5">输入</button>
        <SnapButton label="交点" path="m0 0 8 8m0-8L0 8" />
        <SnapButton label="垂点" active path="M0 5h8M6 1v4" />
        <SnapButton label="中点" active path="M0 4h8M4 3v2" />
        <SnapButton label="顶点" path="m4 0 4 3-1 5H1L0 3z" />
        <SnapButton label="坐标" path="M1 0v8M0 7h8M3 5l4-4M7 1v4" />
        <label className="mx-1 flex items-center">
          <select aria-label="偏移方式" className="w-7 appearance-none bg-transparent"><option>不偏移</option></select>
          <Caret />
        </label>
        <NumberField label="X=" value="0" unit="mm" />
        <NumberField label="Y=" value="0" unit="mm" />
        <label className="mx-1 flex items-center gap-1">
          <input type="checkbox" className="h-[7px] w-[7px] appearance-none border border-[#bbb] bg-white" />
          旋转
        </label>
        <NumberField label="" value="0.000" unit="°" wide />
      </div>
      <div className="flex h-[17px] items-center gap-1.5 bg-gradient-to-b from-[#f8f8f8] to-[#eaeaea] pl-2 whitespace-nowrap">
        {["输入当前列数据", "删除当前列数据", "页面设置", "调换起始跨", "悬臂钢筋代号"].map((label) => (
          <button key={label}>{label}</button>
        ))}
      </div>
      <SpanTable />
    </div>
  );
}

function FloatingButtons() {
  return (
    <div className="absolute top-[488px] right-[25px] flex w-10 flex-col gap-2.5 text-[14px] leading-[18px] text-white">
      <button aria-label="返回顶部" className="flex h-10 items-center justify-center bg-[#bdbdbd]">
        <svg viewBox="0 0 20 16" className="h-4 w-5" fill="none" stroke="#fff" strokeWidth="2">
          <path d="M0 1h20M1 15 10 6l9 9" />
        </svg>
      </button>
      <button className="h-10 bg-[#ff6a00] px-1.5">关注我们</button>
      <button className="h-10 bg-[#ff6a00] px-1">Q Q<br />咨询</button>
    </div>
  );
}

function Browser() {
  return (
    <main className="relative flex min-w-0 flex-col overflow-hidden bg-white">
      <BrowserTabs />
      <div className="mt-0.5 flex flex-1 bg-[#f0f0f0] pl-[5px]">
        <div className="min-w-0 flex-1 border-l border-[#d8d8d8] bg-white">
          <div className="h-[27px] bg-[#404040]" />
          <svg viewBox="1050 60 441 4" preserveAspectRatio="xMinYMin slice" className="ml-[213px] block h-1 w-[441px] max-w-full bg-[#212830]">
            <path d="M1297.500 60v4M1310.500 60v4" stroke="#00cc20" />
            <path d="M1348.500 60v4" stroke="#fff" />
          </svg>
          <div className="mt-6 flex items-center">
            <p className="w-[90px] shrink-0 pl-[5px] text-[16px] font-bold whitespace-nowrap text-[#0a5aa8]">补充问题：</p>
            <FoundationPlan />
          </div>
          <div className="mr-2.5 ml-[5px]">
            <div className="flex border-r-[3px] border-[#b0b0b0]">
              <BeamPlan />
            </div>
            <BeamTools />
          </div>
        </div>
        <div className="w-[5px] shrink-0 pt-[86px]">
          <div className="ml-0.5 h-40 bg-[#c4c4c4]" />
        </div>
      </div>
      <FloatingButtons />
    </main>
  );
}

function Annotations() {
  return (
    <svg viewBox="0 0 1496 645" className="pointer-events-none absolute top-0 left-0 h-[645px] w-[1496px]" fill="none">
      <g stroke="#ff0000" strokeWidth="3" strokeLinecap="round">
        <path d="M242 99.500 160 101M234 107l-38 33M190 147l110-3M1125 274 562 142" />
        <ellipse cx="1205" cy="209" rx="39" ry="28" />
      </g>
      <path
        d="m146 101 18-6v12zM184 149l9-16 9 9zM314 143l-18 7-1-12zM548 139l19-2-4 13z"
        fill="#ff0000"
      />
    </svg>
  );
}

export default function App() {
  return (
    <div className="relative grid h-screen min-h-[600px] grid-cols-[831fr_665fr] overflow-hidden font-['Liberation_Sans','Noto_Sans_CJK_SC',sans-serif] text-[12px] text-black">
      <div className="relative flex min-w-0 flex-col overflow-hidden border-r-4 border-[#0831c8] bg-[#ece9d8]">
        <MainToolbar />
        <div className="flex min-h-0 flex-1">
          <ModulePanel />
          <div className="ml-1.5 flex min-w-0 flex-1 flex-col">
            <ComponentToolbar />
            <div className="flex min-h-0 flex-1 gap-1 pr-[3px]">
              <ComponentTree />
              <PropertyEditor />
            </div>
          </div>
        </div>
        <StirrupDialog />
      </div>
      <Browser />
      <Annotations />
    </div>
  );
}
